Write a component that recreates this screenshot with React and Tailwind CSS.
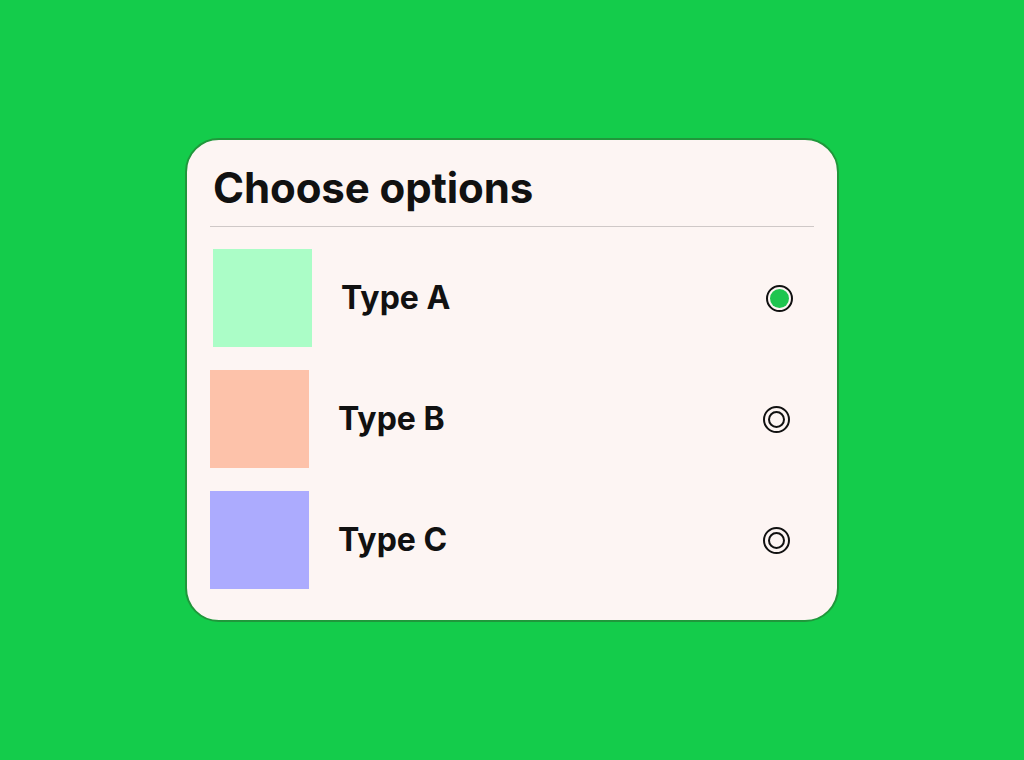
import React, { useState } from 'react';

const options = [
  { id: 'a', label: 'Type A', color: 'bg-[#abfdc7]', shift: 'ml-[3px]' },
  { id: 'b', label: 'Type B', color: 'bg-[#fdc2aa]', shift: '' },
  { id: 'c', label: 'Type C', color: 'bg-[#acabfe]', shift: '' },
];

const Radio = ({ checked }) => (
  <span className="flex h-[27px] w-[27px] items-center justify-center rounded-full border-[2.5px] border-[#111]">
    {checked ? (
      <span className="h-[19px] w-[19px] rounded-full bg-[#1ec54f]" />
    ) : (
      <span className="h-[17px] w-[17px] rounded-full border-[2.5px] border-[#111]" />
    )}
  </span>
);

export default function App() {
  const [selected, setSelected] = useState('a');

  return (
    <div className="flex h-[760px] w-full items-center justify-center bg-[#14cc4b]" style={{ fontFamily: 'Inter, "Noto Sans", sans-serif' }}>
      <div className="h-[484px] w-[654px] rounded-[34px] border-[2.5px] border-[#20973b] bg-[#fdf5f3] px-[23px] pt-[20px]">
        <h1 className="pl-[3px] text-[42px] leading-[56px] font-bold tracking-[-0.1px] text-[#111]">Choose options</h1>
        <div className="mt-[10px] h-px w-[604px] bg-[#cfc8c7]" />
        <div className="mt-[22px] flex flex-col gap-[23px]">
          {options.map((o) => (
            <button
              key={o.id}
              onClick={() => setSelected(o.id)}
              className={`flex w-[580px] items-center text-left ${o.shift}`}
            >
              <span className={`h-[98px] w-[99px] ${o.color}`} />
              <span className="ml-[29px] flex-1 text-[32px] font-bold text-[#111]">{o.label}</span>
              <Radio checked={selected === o.id} />
            </button>
          ))}
        </div>
      </div>
    </div>
  );
}
